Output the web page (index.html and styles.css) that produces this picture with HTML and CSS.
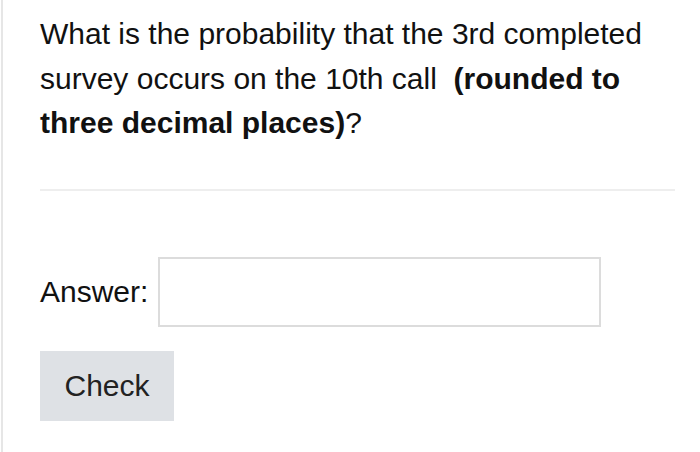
FILE: index.html
```html
<!DOCTYPE html>
<html>
<head>
<meta charset="utf-8">
<link rel="stylesheet" href="styles.css">
</head>
<body>
<div class="page">
  <div class="question">
    <p class="qtext">What is the probability that the 3rd completed survey occurs on the 10th call&nbsp; <strong>(rounded to three decimal places)</strong>?</p>
  </div>
  <div class="rule"></div>
  <div class="answer-row">
    <label class="answer-label" for="ans">Answer:</label>
    <input class="answer-input" id="ans" type="text">
  </div>
  <div class="actions">
    <button class="check-btn" type="button">Check</button>
  </div>
</div>
</body>
</html>
```
FILE: styles.css
```css
html, body {
  margin: 0;
  padding: 0;
  background: #ffffff;
}
body {
  font-family: "Liberation Sans", Arial, Helvetica, sans-serif;
  color: #111111;
}
.page {
  margin-left: 1px;
  border-left: 2px solid #e6e6e6;
  min-height: 452px;
  box-sizing: border-box;
  padding: 12px 25px 0 37px;
}
.qtext {
  margin: 0;
  font-size: 30px;
  line-height: 44.5px;
  width: 635px;
}
.qtext strong {
  font-weight: bold;
}
.rule {
  margin-top: 43px;
  height: 2px;
  background: #eeeeee;
}
.answer-row {
  display: flex;
  align-items: center;
  gap: 10px;
  margin-top: 66px;
}
.answer-label {
  font-size: 30px;
}
.answer-input {
  width: 443px;
  height: 70px;
  box-sizing: border-box;
  border: 2px solid #dcdcdc;
  margin: 0;
  padding: 0 10px;
  font-size: 30px;
  outline: none;
}
.actions {
  margin-top: 24px;
}
.check-btn {
  width: 134px;
  height: 70px;
  border: none;
  background: #dee1e5;
  font-family: "Liberation Sans", Arial, Helvetica, sans-serif;
  font-size: 30px;
  color: #222222;
  padding: 0;
  margin: 0;
}
```
